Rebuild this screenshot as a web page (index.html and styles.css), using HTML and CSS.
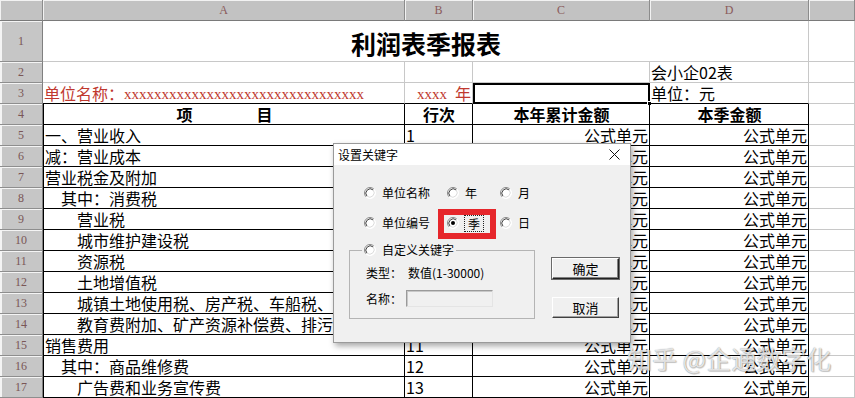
FILE: index.html
```html
<!DOCTYPE html>
<html lang="zh-CN">
<head>
<meta charset="utf-8">
<title>利润表季报表</title>
<link rel="stylesheet" href="styles.css">
</head>
<body>
<svg class="defs" width="0" height="0" aria-hidden="true">
  <defs>
    <symbol id="rb" viewBox="0 0 12 12">
      <circle cx="6" cy="6" r="5.5" fill="#fff"/>
      <path d="M2.1 9.9A5.5 5.5 0 0 1 9.9 2.1" fill="none" stroke="#8a8a8a" stroke-width="1"/>
      <path d="M2.9 9.1A4.4 4.4 0 0 1 9.1 2.9" fill="none" stroke="#404040" stroke-width="1"/>
      <path d="M9.9 2.1A5.5 5.5 0 0 1 2.1 9.9" fill="none" stroke="#ffffff" stroke-width="1"/>
      <path d="M9.1 2.9A4.4 4.4 0 0 1 2.9 9.1" fill="none" stroke="#dcdcdc" stroke-width="1"/>
    </symbol>
  </defs>
</svg>
<div class="screen">
  <div class="sheet">
    <div class="ch corner"></div>
    <div class="ch">A</div>
    <div class="ch">B</div>
    <div class="ch">C</div>
    <div class="ch">D</div>
    <div class="ch"></div>

    <div class="rh">1</div>
    <div class="c title">利润表季报表</div>
    <div class="c"></div>

    <div class="rh">2</div>
    <div class="c"></div>
    <div class="c"></div>
    <div class="c"></div>
    <div class="c">会小企02表</div>
    <div class="c"></div>

    <div class="rh">3</div>
    <div class="c red kb">单位名称：<span class="xs">xxxxxxxxxxxxxxxxxxxxxxxxxxxxxxxx</span></div>
    <div class="c red kb right"><span class="xs">xxxx</span><span class="nian">年</span></div>
    <div class="c sel"><span class="handle"></span></div>
    <div class="c kb">单位：元</div>
    <div class="c"></div>

    <div class="rh">4</div>
    <div class="c k ka hd item"><span>项</span><span>目</span></div>
    <div class="c k hd">行次</div>
    <div class="c k hd">本年累计金额</div>
    <div class="c k hd">本季金额</div>
    <div class="c"></div>

    <div class="rh">5</div>
    <div class="c k ka">一、营业收入</div>
    <div class="c k">1</div>
    <div class="c k right">公式单元</div>
    <div class="c k right">公式单元</div>
    <div class="c"></div>

    <div class="rh">6</div>
    <div class="c k ka">减：营业成本</div>
    <div class="c k">2</div>
    <div class="c k right">公式单元</div>
    <div class="c k right">公式单元</div>
    <div class="c"></div>

    <div class="rh">7</div>
    <div class="c k ka">营业税金及附加</div>
    <div class="c k">3</div>
    <div class="c k right">公式单元</div>
    <div class="c k right">公式单元</div>
    <div class="c"></div>

    <div class="rh">8</div>
    <div class="c k ka in1">其中：消费税</div>
    <div class="c k">4</div>
    <div class="c k right">公式单元</div>
    <div class="c k right">公式单元</div>
    <div class="c"></div>

    <div class="rh">9</div>
    <div class="c k ka in2">营业税</div>
    <div class="c k">5</div>
    <div class="c k right">公式单元</div>
    <div class="c k right">公式单元</div>
    <div class="c"></div>

    <div class="rh">10</div>
    <div class="c k ka in2">城市维护建设税</div>
    <div class="c k">6</div>
    <div class="c k right">公式单元</div>
    <div class="c k right">公式单元</div>
    <div class="c"></div>

    <div class="rh">11</div>
    <div class="c k ka in2">资源税</div>
    <div class="c k">7</div>
    <div class="c k right">公式单元</div>
    <div class="c k right">公式单元</div>
    <div class="c"></div>

    <div class="rh">12</div>
    <div class="c k ka in2">土地增值税</div>
    <div class="c k">8</div>
    <div class="c k right">公式单元</div>
    <div class="c k right">公式单元</div>
    <div class="c"></div>

    <div class="rh">13</div>
    <div class="c k ka in2">城镇土地使用税、房产税、车船税、印花税</div>
    <div class="c k">9</div>
    <div class="c k right">公式单元</div>
    <div class="c k right">公式单元</div>
    <div class="c"></div>

    <div class="rh">14</div>
    <div class="c k ka in2">教育费附加、矿产资源补偿费、排污费</div>
    <div class="c k">10</div>
    <div class="c k right">公式单元</div>
    <div class="c k right">公式单元</div>
    <div class="c"></div>

    <div class="rh">15</div>
    <div class="c k ka">销售费用</div>
    <div class="c k">11</div>
    <div class="c k right">公式单元</div>
    <div class="c k right">公式单元</div>
    <div class="c"></div>

    <div class="rh">16</div>
    <div class="c k ka in1">其中：商品维修费</div>
    <div class="c k">12</div>
    <div class="c k right">公式单元</div>
    <div class="c k right">公式单元</div>
    <div class="c"></div>

    <div class="rh">17</div>
    <div class="c k ka in2">广告费和业务宣传费</div>
    <div class="c k">13</div>
    <div class="c k right">公式单元</div>
    <div class="c k right">公式单元</div>
    <div class="c"></div>
  </div>

  <div class="dialog">
    <div class="titlebar">
      <span>设置关键字</span>
      <svg class="close" width="11" height="11" viewBox="0 0 11 11"><path d="M0.5 0.5L10.5 10.5M10.5 0.5L0.5 10.5" stroke="#111" stroke-width="1"/></svg>
    </div>
    <div class="dbody">
      <div class="dleft">
        <div class="radios">
          <label class="radio"><svg class="rb"><use href="#rb"/></svg><span>单位名称</span></label>
          <label class="radio"><svg class="rb"><use href="#rb"/></svg><span>年</span></label>
          <label class="radio"><svg class="rb"><use href="#rb"/></svg><span>月</span></label>
          <label class="radio"><svg class="rb"><use href="#rb"/></svg><span>单位编号</span></label>
          <label class="radio checked"><svg class="rb"><use href="#rb"/><circle cx="6" cy="6" r="2" fill="#000"/></svg><span class="focus">季</span></label>
          <label class="radio"><svg class="rb"><use href="#rb"/></svg><span>日</span></label>
        </div>
        <fieldset class="group">
          <legend class="radio"><svg class="rb"><use href="#rb"/></svg><span>自定义关键字</span></legend>
          <div class="gline first"><span>类型：</span><span>数值(1-30000)</span></div>
          <div class="gline second"><span>名称：</span><span class="field"></span></div>
        </fieldset>
      </div>
      <div class="dright">
        <button class="btn default">确定</button>
        <button class="btn">取消</button>
      </div>
    </div>
    <div class="mark"></div>
  </div>

  <div class="watermark">知乎 @企通数字化</div>
</div>
</body>
</html>
```
FILE: styles.css
```css
* {
  box-sizing: border-box;
  margin: 0;
  padding: 0;
}

html,
body {
  width: 855px;
  height: 398px;
  overflow: hidden;
  background: #fff;
}

body {
  font-family: "Noto Sans CJK SC", "Noto Sans", sans-serif;
  color: #000;
}

.defs {
  position: absolute;
  width: 0;
  height: 0;
}

.screen {
  position: relative;
  width: 855px;
  height: 398px;
  overflow: hidden;
}

/* ---------- spreadsheet ---------- */
.sheet {
  display: grid;
  grid-template-columns: 43px 362px 68px 177px 159px 46px;
  grid-template-rows: 21px 41px repeat(16, 21px);
}

.ch {
  background: #c2c2c2;
  border-right: 1px solid #8c8c8c;
  border-bottom: 1px solid #7a7a7a;
  box-shadow: inset 1px 1px 0 #f2f2f2;
  font-family: "Liberation Serif", serif;
  font-size: 12px;
  color: #8a5a5a;
  display: flex;
  align-items: center;
  justify-content: center;
}

.rh {
  background: #c6c6c6;
  border-right: 1px solid #808080;
  border-bottom: 1px solid #8e8e8e;
  box-shadow: inset 2px 1px 0 #f4f4f4;
  font-family: "Liberation Serif", serif;
  font-size: 12px;
  color: #7a5656;
  display: flex;
  align-items: center;
  justify-content: center;
}

.c {
  position: relative;
  border-right: 1px solid #c8c8c8;
  border-bottom: 1px solid #c8c8c8;
  font-size: 16px;
  line-height: 20px;
  display: flex;
  align-items: flex-end;
  white-space: nowrap;
  padding-left: 1px;
}

.k {
  border-right-color: #000;
  border-bottom-color: #000;
}

.ka {
  border-left: 1px solid #000;
}

.kb {
  border-bottom-color: #000;
}

.right {
  justify-content: flex-end;
  padding-right: 1px;
}

.in1 {
  padding-left: 17px;
}

.in2 {
  padding-left: 33px;
}

.title {
  grid-column: span 4;
  justify-content: center;
  font-size: 25px;
  line-height: 28px;
  font-weight: 700;
  padding-bottom: 4px;
}

.red {
  color: #c0392f;
}

.xs {
  font-family: "Liberation Serif", serif;
  font-size: 15px;
  line-height: 18px;
}

.nian {
  margin-left: 8px;
}

.sel {
  border: 2px solid #000;
}

.handle {
  position: absolute;
  right: -4px;
  bottom: -4px;
  width: 5px;
  height: 5px;
  background: #000;
  border: 1px solid #fff;
}

.hd {
  font-weight: 700;
  justify-content: center;
}

.item {
  gap: 64px;
}

/* ---------- dialog ---------- */
.dialog {
  position: absolute;
  left: 333px;
  top: 143px;
  width: 298px;
  height: 200px;
  background: #f0f0f0;
  border: 1px solid #9a9a9a;
  box-shadow: 2px 3px 6px rgba(0, 0, 0, 0.35);
  font-size: 12px;
  line-height: 16px;
  display: flex;
  flex-direction: column;
}

.titlebar {
  height: 21px;
  flex: none;
  background: #fff;
  display: flex;
  align-items: center;
  justify-content: space-between;
  padding: 0 10px 0 4px;
}

.close {
  display: block;
}

.dbody {
  flex: 1;
  display: flex;
  padding-left: 15px;
}

.dleft {
  width: 186px;
  flex: none;
}

.radios {
  display: grid;
  grid-template-columns: 83px 53px auto;
  row-gap: 12px;
  margin: 19px 0 0 15px;
}

.radio {
  display: flex;
  align-items: center;
  gap: 6px;
  height: 18px;
}

.rb {
  width: 12px;
  height: 12px;
  flex: none;
}

.checked {
  gap: 5px;
}

.focus {
  border: 1px dotted #222;
  padding: 0 3px;
  line-height: 15px;
}

.group {
  margin-top: 10px;
  width: 186px;
  border: 1px solid #b4b4b4;
  padding: 0 0 11px 0;
}

.group legend {
  margin-left: 12px;
  padding: 0 2px;
  height: 16px;
}

.gline {
  display: flex;
  align-items: center;
  padding-left: 16px;
}

.gline.first {
  margin-top: 7px;
  height: 16px;
  gap: 6px;
}

.gline.second {
  margin-top: 9px;
  height: 17px;
  gap: 4px;
}

.field {
  width: 87px;
  height: 17px;
  background: #f0f0f0;
  border: 1px solid;
  border-color: #9a9a9a #e4e4e4 #e4e4e4 #9a9a9a;
  box-shadow: inset 1px 1px 0 #c8c8c8;
}

.dright {
  margin-left: 17px;
  display: flex;
  flex-direction: column;
  gap: 18px;
  padding-top: 93px;
}

.btn {
  width: 67px;
  height: 21px;
  font-family: "Noto Sans CJK SC", sans-serif;
  font-size: 13px;
  line-height: 17px;
  color: #000;
  background: #f0f0f0;
  border: 1px solid;
  border-color: #fff #404040 #404040 #fff;
  box-shadow: inset -1px -1px 0 #a0a0a0;
}

.btn.default {
  border-color: #fff #222 #222 #fff;
  box-shadow: inset -1px -1px 0 #808080, 0 0 0 1px #6a6a6a;
}

.mark {
  position: absolute;
  left: 104px;
  top: 65px;
  width: 58px;
  height: 30px;
  border: 6px solid #e6262b;
}

/* ---------- watermark ---------- */
.watermark {
  position: absolute;
  left: 627px;
  top: 342px;
  font-size: 25px;
  line-height: 32px;
  white-space: nowrap;
  color: rgba(255, 255, 255, 0.8);
  text-shadow: 0 0 1px rgba(0, 0, 0, 0.5), 1px 1px 1px rgba(0, 0, 0, 0.2);
}
```
